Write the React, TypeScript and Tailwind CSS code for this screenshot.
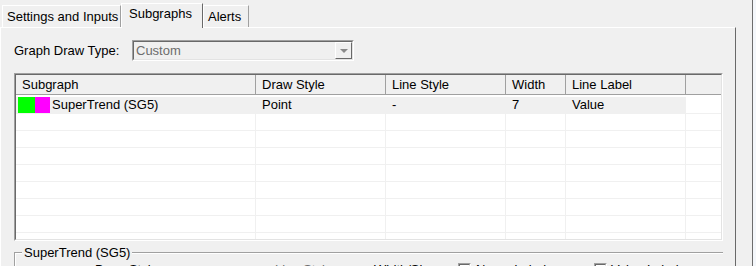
const cols = [
  { label: "Subgraph", w: "w-[240px]" },
  { label: "Draw Style", w: "w-[130px]" },
  { label: "Line Style", w: "w-[120px]" },
  { label: "Width", w: "w-[60px]" },
  { label: "Line Label", w: "w-[120px]" },
];

const Tab = ({ label, active, w }: { label: string; active?: boolean; w: string }) => {
  if (active) {
    return (
      <div
        className={`${w} h-[25px] -mb-px relative z-10 bg-[#f0f0f0] border-l border-t border-r border-l-white border-t-white border-r-[#696969] pl-[7px] pt-[2px] leading-[15px]`}
      >
        {label}
      </div>
    );
  }
  return (
    <div
      className={`${w} h-[22px] bg-[#f0f0f0] border-l border-t border-r border-l-white border-t-white border-r-[#a0a0a0] pl-[4px] pt-[3px] leading-[15px]`}
    >
      {label}
    </div>
  );
};

const Checkbox = () => (
  <div className="w-[13px] h-[13px] border border-t-[#a0a0a0] border-l-[#a0a0a0] border-b-white border-r-white">
    <div className="w-full h-full border border-t-[#696969] border-l-[#696969] border-b-[#e3e3e3] border-r-[#e3e3e3] bg-white" />
  </div>
);

export default function App() {
  return (
    <div
      className="w-[756px] h-[266px] overflow-hidden bg-[#f0f0f0] text-black text-[13px] flex"
      style={{ fontFamily: '"Liberation Sans", Arial, sans-serif' }}
    >
      <div className="w-[736px] flex flex-col shrink-0">
        {/* tab strip */}
        <div className="h-[27px] flex items-end pl-[2px] shrink-0">
          <Tab label="Settings and Inputs" w="w-[119px]" />
          <Tab label="Subgraphs" w="w-[82px]" active />
          <Tab label="Alerts" w="w-[46px]" />
        </div>

        {/* tab pane */}
        <div className="flex-1 border-t border-l border-r border-t-white border-l-white border-r-[#696969] pl-[13px] pt-[12px] pr-[12px]">
          <div className="flex items-center h-[21px]">
            <span className="w-[118px] leading-[15px]">Graph Draw Type:</span>
            <div className="w-[222px] h-[21px] border border-t-[#a0a0a0] border-l-[#a0a0a0] border-b-white border-r-white">
              <div className="h-full flex border border-t-[#696969] border-l-[#696969] border-b-[#e3e3e3] border-r-[#e3e3e3]">
                <div className="flex-1 pl-[2px] leading-[17px] text-[#6d6d6d]">Custom</div>
                <div className="w-[17px] h-full border border-t-white border-l-white border-b-[#696969] border-r-[#696969] flex items-center justify-center">
                  <div className="w-0 h-0 border-l-[4px] border-r-[4px] border-t-[4px] border-l-transparent border-r-transparent border-t-[#8a8a8a]" />
                </div>
              </div>
            </div>
          </div>

          {/* list view */}
          <div className="mt-[12px] w-[709px] h-[168px] border border-t-[#a0a0a0] border-l-[#a0a0a0] border-b-white border-r-white">
            <div className="h-full border border-t-[#696969] border-l-[#696969] border-b-[#e3e3e3] border-r-[#e3e3e3] bg-white overflow-hidden">
              <div className="h-[20px] flex bg-[#f0f0f0] border-b border-b-[#a0a0a0]">
                {cols.map((c) => (
                  <div
                    key={c.label}
                    className={`${c.w} h-full pl-[6px] leading-[19px] border-r border-r-[#a0a0a0] shrink-0`}
                  >
                    {c.label}
                  </div>
                ))}
                <div className="flex-1" />
              </div>
              <div className="pt-[2px]">
                {Array.from({ length: 9 }).map((_, i) => (
                  <div key={i} className="h-[17px] flex border-b border-b-[#f0f0f0]">
                    {cols.map((c, j) => (
                      <div
                        key={c.label}
                        className={`${c.w} h-full shrink-0 border-r border-r-[#f0f0f0] leading-[16px] flex items-center ${
                          i === 0 ? "bg-[#f0f0f0]" : ""
                        } ${j === 0 ? "pl-[2px]" : "pl-[6px]"}`}
                      >
                        {i === 0 && j === 0 && (
                          <>
                            <div className="w-[17px] h-[16px] bg-[#00ff00]" />
                            <div className="w-[15px] h-[16px] bg-[#ff00ff]" />
                            <span className="pl-[2px]">SuperTrend (SG5)</span>
                          </>
                        )}
                        {i === 0 && j === 1 && "Point"}
                        {i === 0 && j === 2 && "-"}
                        {i === 0 && j === 3 && "7"}
                        {i === 0 && j === 4 && "Value"}
                      </div>
                    ))}
                    <div className="flex-1" />
                  </div>
                ))}
              </div>
            </div>
          </div>

          {/* group box */}
          <div className="relative mt-[11px] w-[709px] h-[40px] border-t border-l border-t-[#a0a0a0] border-l-[#a0a0a0]">
            <div className="h-full border-t border-l border-t-white border-l-white">
              <div className="absolute -top-[8px] left-[7px] px-[2px] bg-[#f0f0f0] leading-[15px]">
                SuperTrend (SG5)
              </div>
              <div className="flex items-center pt-[8px] leading-[15px]">
                <span className="ml-[79px] w-[180px]">Draw Style</span>
                <span className="w-[99px] text-[#6d6d6d]">Line Style</span>
                <span className="w-[84px]">Width/Size</span>
                <Checkbox />
                <span className="ml-[5px] w-[118px]">Name Label</span>
                <Checkbox />
                <span className="ml-[4px]">Value Label</span>
              </div>
            </div>
          </div>
        </div>
      </div>

      {/* window edge */}
      <div className="w-[16px] shrink-0" />
      <div className="w-px bg-[#6d6d6d] shrink-0" />
      <div className="flex-1 bg-[#f4f7fb]" />
    </div>
  );
}
